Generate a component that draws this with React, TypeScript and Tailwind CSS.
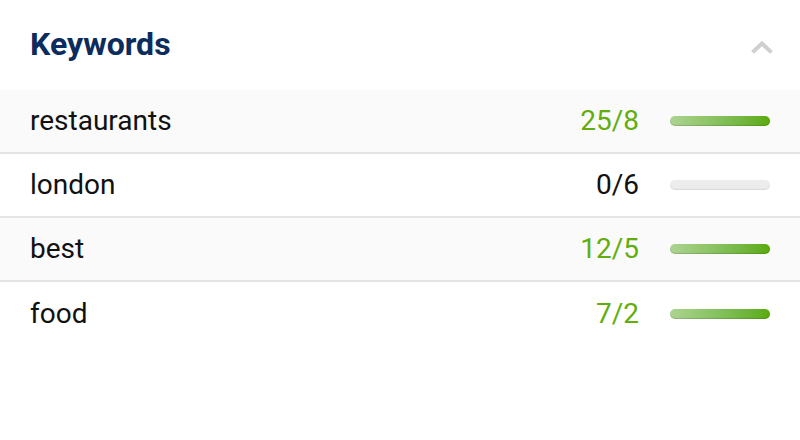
import React from "react";

const rows = [
  { k: "restaurants", v: "25/8", ok: true, bg: true },
  { k: "london", v: "0/6", ok: false, bg: false },
  { k: "best", v: "12/5", ok: true, bg: true },
  { k: "food", v: "7/2", ok: true, bg: false },
];

export default function App() {
  return (
    <div className="w-[800px] h-[440px] bg-white" style={{ fontFamily: "Roboto, 'Liberation Sans', sans-serif" }}>
      <div className="h-[90px] flex items-center justify-between pl-[30px] pr-[27px]">
        <h1 className="text-[32px] font-bold text-[#0b2c5c] leading-none -mt-[2px]">Keywords</h1>
        <svg width="22" height="14" viewBox="0 0 22 14" className="mt-[4px]">
          <path d="M3 11 L11 3.5 L19 11" fill="none" stroke="#cfcfcf" strokeWidth="4" strokeLinecap="square" />
        </svg>
      </div>
      <div className="flex flex-col">
        {rows.map((r, i) => (
          <div
            key={r.k}
            className={`h-[64px] flex items-center pl-[30px] pr-[30px] ${i < rows.length - 1 ? "border-b-2 border-[#e4e4e4]" : ""} ${r.bg ? "bg-[#fafafa]" : "bg-white"}`}
          >
            <span className="flex-1 text-[28px] text-[#111111] leading-none">{r.k}</span>
            <span className={`text-[28px] leading-none ${r.ok ? "text-[#62ae0c]" : "text-[#111111]"}`}>{r.v}</span>
            {r.ok ? (
              <div className="ml-[31px] w-[100px] h-[10px] rounded-full bg-gradient-to-r from-[#acd490] to-[#5aab00] shadow-[inset_0_-1px_1px_rgba(0,0,0,0.15)]" />
            ) : (
              <div className="ml-[31px] w-[100px] h-[10px] rounded-full bg-[#ececec] shadow-[inset_0_-1px_1px_rgba(0,0,0,0.08)]" />
            )}
          </div>
        ))}
      </div>
    </div>
  );
}
